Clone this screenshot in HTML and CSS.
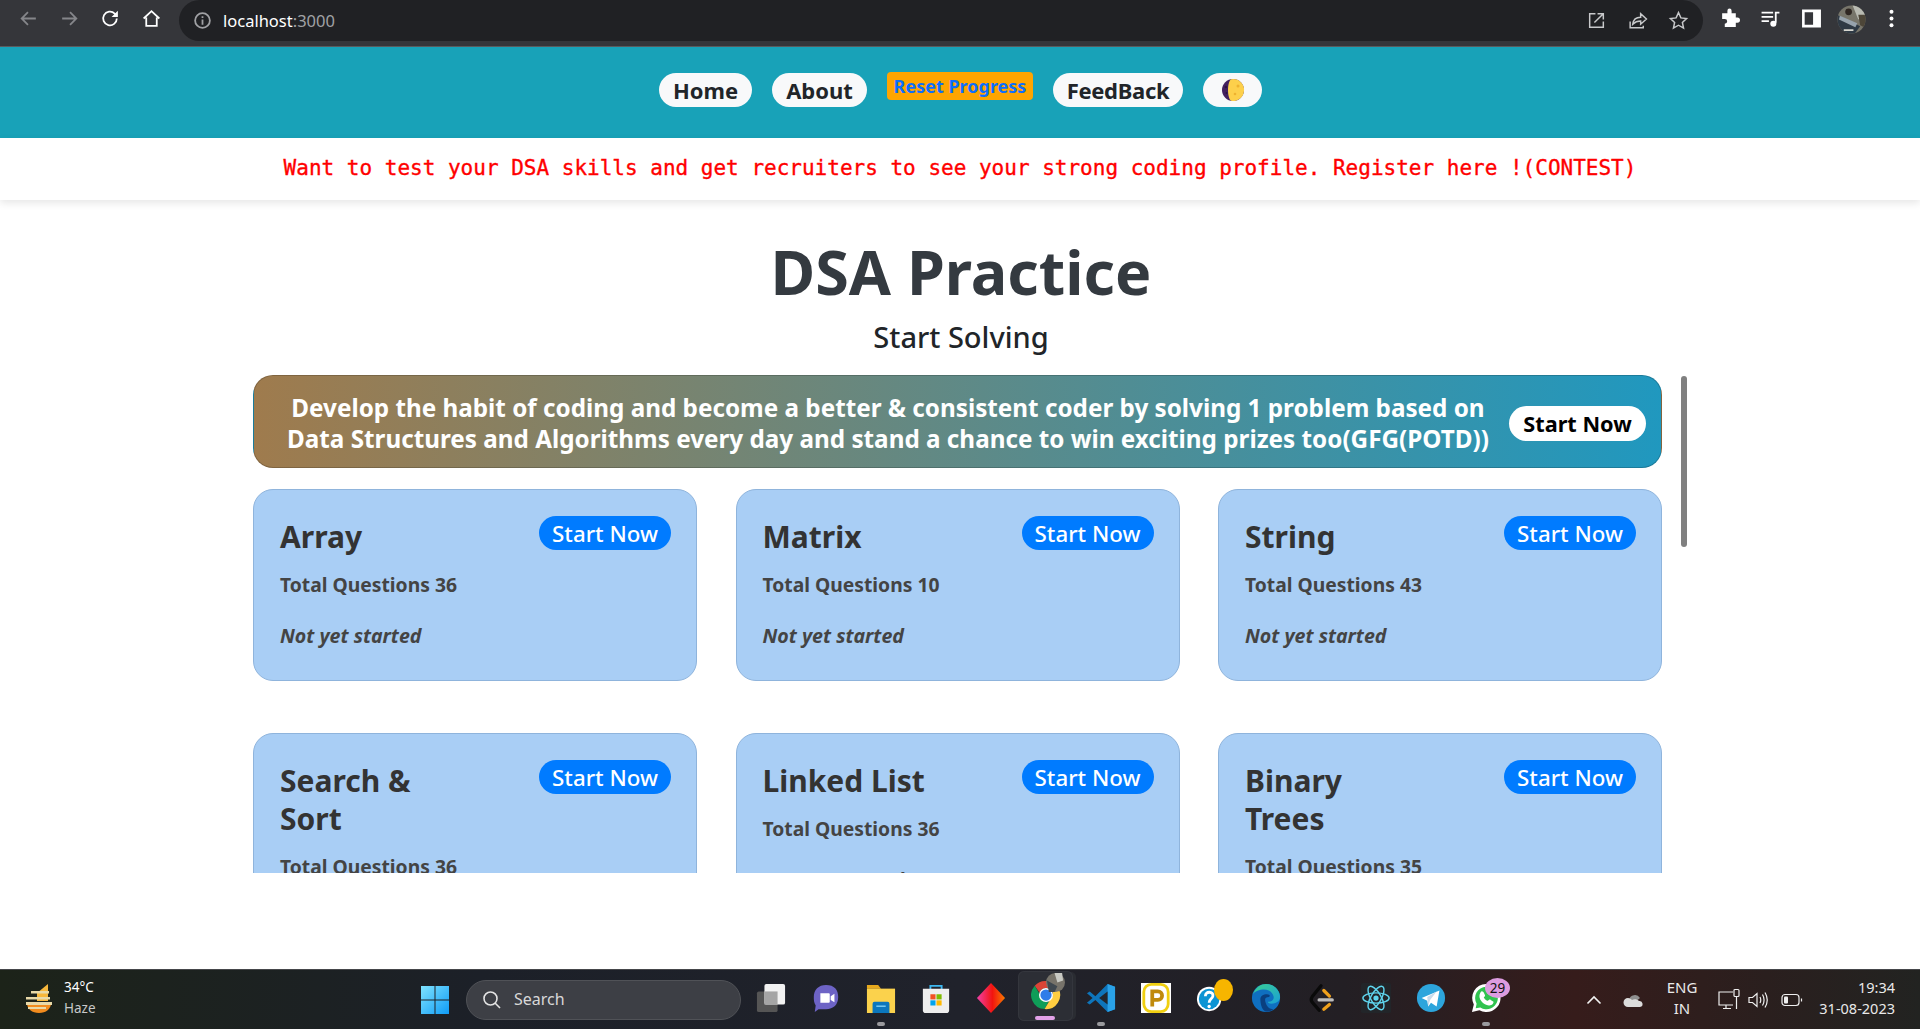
FILE: index.html
```html
<!DOCTYPE html>
<html lang="en">
<head>
<meta charset="utf-8">
<title>DSA Practice</title>
<link rel="stylesheet" href="styles.css">
</head>
<body>
<div class="browser-bar">
  <div class="nav-buttons">
    <svg class="tb-icon" viewBox="0 0 20 20"><path class="st-dim" d="M17 10H4M9.5 4 3.5 10l6 6"/></svg>
    <svg class="tb-icon" viewBox="0 0 20 20"><path class="st-dim" d="M3 10h13M10.500 4l6 6-6 6"/></svg>
    <svg class="tb-icon" viewBox="0 0 20 20"><path class="st-white" d="M16 10a6.500 6.500 0 1 1-2-4.700L16 7.200"/><path class="fill-white" d="M17 2.500v6h-6z"/></svg>
    <svg class="tb-icon" viewBox="0 0 20 20"><path class="st-white" d="M2.500 10 10 3l7.500 7M5 9v8h10V9"/></svg>
  </div>
  <div class="omnibox">
    <svg class="info-icon" viewBox="0 0 18 18"><circle class="st-gray" cx="9" cy="9" r="7"/><path class="st-gray" d="M9 8v5M9 5v1.600"/></svg>
    <span class="url-host">localhost</span><span class="url-port">:3000</span>
    <div class="omni-actions">
      <svg class="tb-icon" viewBox="0 0 20 20"><path class="st-light" d="M16.500 11v5.500h-13v-13H9M8 12 16 4M11 3.500h5.500V9"/></svg>
      <svg class="tb-icon" viewBox="0 0 20 20"><path class="st-light" d="M3 11v6h12.500v-2M5.500 13.500c.5-4 3.500-6.500 7.500-6.500V3.500l5.500 5-5.500 5V10.500c-3 0-5.500 1-7.500 3z"/></svg>
      <svg class="tb-icon" viewBox="0 0 20 20"><path class="st-light" d="m10 2.500 2.300 5 5.400.6-4 3.700 1.100 5.400L10 14.500l-4.800 2.700 1.100-5.400-4-3.700 5.400-.6z"/></svg>
    </div>
  </div>
  <div class="ext-buttons">
    <svg class="tb-icon" viewBox="0 0 20 20"><path class="fill-white" d="M8 2.500a2 2 0 0 1 4 0V5h4v4h1.500a2.300 2.300 0 0 1 0 5H16v4H5.500v-3a2.300 2.300 0 0 0 0-4.600H3V5h5z"/></svg>
    <svg class="tb-icon" viewBox="0 0 20 20"><path class="st-white" d="M1.500 4.500h11M1.500 8.500h11M1.500 12.500h7M15 14V4.500h3.500"/><circle class="fill-white" cx="12.700" cy="15" r="2.900"/></svg>
    <svg class="tb-icon" viewBox="0 0 20 20"><path class="fill-white" fill-rule="evenodd" d="M1 1.500h18v17H1zM3.500 4v12h8V4z"/></svg>
    <svg class="avatar" viewBox="0 0 30 30">
      <defs><clipPath id="avatar-clip"><circle cx="15" cy="15" r="14.500"/></clipPath></defs>
      <g clip-path="url(#avatar-clip)">
        <rect width="30" height="30" fill="#77756a"/>
        <path fill="#b9bbb2" d="M16 0h14v10l-8 5z"/>
        <path fill="#2f3a45" d="M0 10 24 22 18 30H0z"/>
        <path fill="#97a3ad" d="m3 11 18 8-2 4L2 15z"/>
        <path fill="#4d4638" d="M22 10h8v14l-6-3z"/>
        <circle cx="12" cy="7" r="3.500" fill="#2f2722"/>
        <path fill="#d8d7cf" d="M7 25h10v2H7z"/>
      </g>
    </svg>
    <svg class="tb-icon" viewBox="0 0 20 20"><circle class="fill-white" cx="10" cy="3.500" r="1.900"/><circle class="fill-white" cx="10" cy="10" r="1.900"/><circle class="fill-white" cx="10" cy="16.500" r="1.900"/></svg>
  </div>
</div>

<header class="site-header">
  <nav class="site-nav">
    <a class="pill">Home</a>
    <a class="pill pill-about">About</a>
    <button class="reset-btn">Reset Progress</button>
    <a class="pill pill-feedback">FeedBack</a>
    <a class="pill pill-theme">
      <svg class="moon" viewBox="0 0 24 24">
        <circle cx="12" cy="12" r="11" fill="#43205f"/>
        <path fill="#fdd04b" d="M10 1.200A11 11 0 1 1 10 22.800c-4-3-4-18.600 0-21.600z"/>
        <circle cx="4.800" cy="9" r="1.200" fill="#2c1542"/>
        <circle cx="5.500" cy="15" r="1" fill="#2c1542"/>
        <circle cx="17" cy="8" r="1.500" fill="#eeb22f"/>
        <circle cx="14" cy="16" r="1.300" fill="#eeb22f"/>
      </svg>
    </a>
  </nav>
</header>

<div class="notice">Want to test your DSA skills and get recruiters to see your strong coding profile. Register here !(CONTEST)</div>

<main class="page">
  <h1 class="page-title">DSA Practice</h1>
  <p class="page-subtitle">Start Solving</p>
  <div class="scroll-area">
    <section class="potd">
      <p class="potd-text">Develop the habit of coding and become a better &amp; consistent coder by solving 1 problem based on Data Structures and Algorithms every day and stand a chance to win exciting prizes too(GFG(POTD))</p>
      <a class="potd-btn">Start Now</a>
    </section>
    <section class="cards">
      <article class="card">
        <div class="card-top"><h3 class="card-title">Array</h3><a class="start-btn">Start Now</a></div>
        <p class="card-total">Total Questions 36</p>
        <p class="card-status">Not yet started</p>
      </article>
      <article class="card">
        <div class="card-top"><h3 class="card-title">Matrix</h3><a class="start-btn">Start Now</a></div>
        <p class="card-total">Total Questions 10</p>
        <p class="card-status">Not yet started</p>
      </article>
      <article class="card">
        <div class="card-top"><h3 class="card-title">String</h3><a class="start-btn">Start Now</a></div>
        <p class="card-total">Total Questions 43</p>
        <p class="card-status">Not yet started</p>
      </article>
      <article class="card">
        <div class="card-top"><h3 class="card-title">Search &amp; Sort</h3><a class="start-btn">Start Now</a></div>
        <p class="card-total">Total Questions 36</p>
        <p class="card-status">Not yet started</p>
      </article>
      <article class="card">
        <div class="card-top"><h3 class="card-title">Linked List</h3><a class="start-btn">Start Now</a></div>
        <p class="card-total">Total Questions 36</p>
        <p class="card-status">Not yet started</p>
      </article>
      <article class="card">
        <div class="card-top"><h3 class="card-title">Binary Trees</h3><a class="start-btn">Start Now</a></div>
        <p class="card-total">Total Questions 35</p>
        <p class="card-status">Not yet started</p>
      </article>
    </section>
  </div>
  <div class="scroll-thumb"></div>
</main>

<footer class="taskbar">
  <div class="weather">
    <svg class="weather-icon" viewBox="0 0 32 32">
      <path fill="#f28c1e" d="M4 20h24c0 6-5 10-12 10S4 26 4 20z"/>
      <path fill="#f6b73c" d="M14 10 25 1v17H14z"/>
      <path fill="#e8d9a8" d="M3 14h24v2.500H3zM3 19h26v3H3zM8 8h18v2.500H8zM5 24h18v2H5z"/>
    </svg>
    <div class="weather-text"><span>34°C</span><span class="weather-sub">Haze</span></div>
  </div>
  <div class="task-center">
    <svg class="start-icon" viewBox="0 0 28 28">
      <defs><linearGradient id="win" x1="0" y1="0" x2="1" y2="1"><stop offset="0" stop-color="#7fe3ff"/><stop offset="1" stop-color="#0f9bf5"/></linearGradient></defs>
      <path fill="url(#win)" d="M0 0h13.500v13.500H0zM14.500 0H28v13.500H14.500zM0 14.500h13.500V28H0zM14.500 14.500H28V28H14.500z"/>
    </svg>
    <div class="search-box">
      <svg class="search-icon" viewBox="0 0 20 20"><circle cx="8.500" cy="8.500" r="6.500"/><path d="m13 13 5 5"/></svg>
      <span class="search-label">Search</span>
    </div>
    <div class="task-icons">
      <div class="task-slot"><svg class="task-icon" viewBox="0 0 32 32"><rect x="1" y="9" width="22" height="22" rx="2" fill="#555"/><rect x="9" y="1" width="22" height="22" rx="2" fill="#f2f2f2"/><rect x="9" y="9" width="14" height="14" fill="#a5a5a5"/></svg></div>
      <div class="task-slot"><svg class="task-icon" viewBox="0 0 32 32"><path fill="#6d63c5" d="M16 2c9 0 13 5 13 13s-5 13-13 13H8l-4 3 1-7C3 21 3 18 3 15 3 7 8 2 16 2z"/><path fill="#fff" d="M10 11h9a1 1 0 0 1 1 1v8a1 1 0 0 1-1 1h-9zM21 14l4-2.500v9L21 18z"/></svg></div>
      <div class="task-slot has-dot"><svg class="task-icon" viewBox="0 0 32 32"><path fill="#e7a91d" d="M1 2h12l3 4H1z"/><path fill="#fbd24c" d="M1 6h30v26H1z"/><path fill="#0b77bd" d="M9 20h14a2 2 0 0 1 2 2v10H7V22a2 2 0 0 1 2-2z"/><path fill="#7cd0f7" d="M11 24h10v1.500H11z"/></svg></div>
      <div class="task-slot"><svg class="task-icon" viewBox="0 0 32 32"><path fill="none" stroke="#3db7f0" stroke-width="2" d="M10 9V3h12v6"/><path fill="#eeeeee" d="M2 6h28v23a3 3 0 0 1-3 3H5a3 3 0 0 1-3-3z"/><path fill="#f25022" d="M10 12h5.500v5.500H10z"/><path fill="#7fba00" d="M16.500 12H22v5.500h-5.500z"/><path fill="#00a4ef" d="M10 18.500h5.500V24H10z"/><path fill="#ffb900" d="M16.500 18.500H22V24h-5.500z"/></svg></div>
      <div class="task-slot"><svg class="task-icon" viewBox="0 0 32 32"><defs><linearGradient id="dia" x1="0" y1="0" x2="1" y2="0"><stop offset="0" stop-color="#f040a8"/><stop offset=".55" stop-color="#f2140f"/><stop offset="1" stop-color="#f97a00"/></linearGradient></defs><path fill="url(#dia)" d="M16 0 31 22 16 44 1 22z" transform="scale(1 .727)"/></svg></div>
      <div class="task-slot is-active"><svg class="task-icon" viewBox="0 0 32 32"><path fill="#db4437" d="M16 1a15 15 0 0 1 13 7.500H16a7.500 7.500 0 0 0-7 4.800L4 6a15 15 0 0 1 12-5z"/><path fill="#0f9d58" d="M4 6l6.500 11.300a7.500 7.500 0 0 0 8.500 5.600L14.500 31A15 15 0 0 1 4 6z"/><path fill="#ffcd40" d="M29 8.500A15 15 0 0 1 14.500 31L21 20a7.500 7.500 0 0 0-.500-11.500z"/><circle cx="16" cy="16" r="7.500" fill="#fff"/><circle cx="16" cy="16" r="6" fill="#2f7de9"/></svg><svg class="chrome-badge" viewBox="0 0 20 20"><circle cx="10" cy="10" r="10" fill="#77736a"/><path fill="#c8c9c3" d="M9 0h8l1 8-6 2z"/><path fill="#3f4850" d="m1 8 11 6-3 6H3z"/></svg></div>
      <div class="task-slot has-dot"><svg class="task-icon" viewBox="0 0 32 32"><path fill="#0e75bb" d="M23 1 10 14 4 9 1 11l6 5-6 5 3 2 6-5 13 13 8-3V4z"/><path fill="#2aa2e8" d="M23 1v30l8-3V4z"/><path fill="#22262d" d="m23 9-9 7 9 7z"/></svg></div>
      <div class="task-slot"><svg class="task-icon" viewBox="0 0 32 32"><rect width="32" height="32" fill="#fff"/><rect x="3" y="1.500" width="26" height="29" rx="8" fill="none" stroke="#f0cf10" stroke-width="3"/><path fill="none" stroke="#c08a0c" stroke-width="4" d="M12 25V9h6a4.500 4.500 0 0 1 0 9h-6"/></svg></div>
      <div class="task-slot"><svg class="task-icon" viewBox="0 0 32 32"><circle cx="14" cy="17" r="13" fill="#fff"/><circle cx="14" cy="17" r="11" fill="#0c94d4"/><path fill="none" stroke="#fff" stroke-width="3" d="M10 14c0-6 9-5 8 0-.5 3-4 3-4 7"/><circle cx="14" cy="25" r="1.800" fill="#fff"/></svg><span class="help-badge"></span></div>
      <div class="task-slot"><svg class="task-icon" viewBox="0 0 32 32"><defs><linearGradient id="edge" x1="0" y1="0" x2="1" y2="1"><stop offset="0" stop-color="#3bd08f"/><stop offset="1" stop-color="#1a9fd6"/></linearGradient></defs><circle cx="16" cy="16" r="15" fill="#0f6fc0"/><path fill="url(#edge)" d="M2 12C5 4 11 1 16 1c9 0 15 7 15 14 0 5-5 7-9 7-3 0-4-1-4-2 5 0 7-3 6-6-1-4-5-7-10-7C9 7 4 9 2 12z"/><path fill="#0a3f7f" d="M10 17c0-3 3-5 7-5 3 0 4 2 2 3-4 0-5 2-3 7 1 3 4 6 8 6-3 2-6 3-9 2-4-2-5-9-5-13z"/></svg></div>
      <div class="task-slot"><svg class="task-icon" viewBox="0 0 32 32"><path fill="none" stroke="#0a0a0a" stroke-width="3.500" stroke-linecap="round" d="m16 3-9 11c-2 3-2 5 0 7l7 8"/><path fill="none" stroke="#f0a11c" stroke-width="3.500" stroke-linecap="round" d="M19 8l6 6M19 28l6-5"/><path stroke="#bdbdbd" stroke-width="3.500" stroke-linecap="round" d="M14 18h14"/></svg></div>
      <div class="task-slot"><svg class="task-icon" viewBox="0 0 32 32"><rect width="32" height="32" rx="2" fill="#222529"/><g fill="none" stroke="#5fd5ee" stroke-width="1.500"><ellipse cx="16" cy="16" rx="14" ry="5.500"/><ellipse cx="16" cy="16" rx="14" ry="5.500" transform="rotate(60 16 16)"/><ellipse cx="16" cy="16" rx="14" ry="5.500" transform="rotate(120 16 16)"/></g><circle cx="16" cy="16" r="2.800" fill="#5fd5ee"/></svg></div>
      <div class="task-slot"><svg class="task-icon" viewBox="0 0 32 32"><circle cx="16" cy="16" r="15" fill="#2da5dc"/><path fill="#fff" d="M6 16 25 8l-3 17-6-4-3 4-1-6z"/><path fill="#c8daea" d="m12 15 10-6-7 9-2 7z"/></svg></div>
      <div class="task-slot has-dot"><svg class="task-icon" viewBox="0 0 32 32"><path fill="#fff" d="M16 1a15 15 0 0 0-13 22L1 31l8-2A15 15 0 1 0 16 1z"/><path fill="#31c34f" d="M16 4A12 12 0 0 0 6 22l-1 5 5-1A12 12 0 1 0 16 4z"/><path fill="#fff" d="M11 9c2-1 3 2 4 4 0 2-2 2-1 3 1 2 3 3 4 3 1-1 2-2 3-1l3 2c0 3-3 4-5 4-6-1-10-6-10-10 0-2 1-4 2-5z"/></svg><span class="wa-badge">29</span></div>
    </div>
  </div>
  <div class="tray">
    <svg class="tray-chev" viewBox="0 0 16 16"><path d="M1.500 11.500 8 5l6.500 6.500"/></svg>
    <svg class="tray-cloud" viewBox="0 0 22 14"><path fill="#8f8f8f" d="M6 7a6 6 0 0 1 11-2l-7 6z"/><path fill="#dcdcdc" d="M5 14a4.500 4.500 0 0 1 0-9c2 0 3 1 4 2 2-1 5-1 7 1a3 3 0 0 1 1 6z"/></svg>
    <div class="tray-lang"><span>ENG</span><span>IN</span></div>
    <svg class="tray-net" viewBox="0 0 24 24"><path d="M16 4H2v13h14M6 20.500h8M9 17v3.500"/><rect x="17" y="1.500" width="5" height="7" rx="1"/><path d="M19.500 8.500V21"/></svg>
    <svg class="tray-vol" viewBox="0 0 22 20"><path d="M2 7.500h3.500L10 3.500v13l-4.500-4H2zM13 7c1 2 1 4 0 6M15.500 4.500c2 3.500 2 7.500 0 11M18 2.500c3 5 3 10 0 15"/></svg>
    <svg class="tray-bat" viewBox="0 0 22 14"><rect x="1" y="1.500" width="17" height="11" rx="3"/><path d="M20.500 5.500v3"/><rect class="bat-level" x="3" y="3.500" width="4" height="7" rx="1"/></svg>
    <div class="tray-clock"><span>19:34</span><span>31-08-2023</span></div>
  </div>
</footer>
</body>
</html>
```

FILE: styles.css
```css
* { box-sizing: border-box; }
html, body { margin: 0; height: 100%; }
body {
  width: 1920px;
  height: 1029px;
  overflow: hidden;
  display: flex;
  flex-direction: column;
  background: #fff;
  font-family: "Noto Sans", "Open Sans", sans-serif;
}
p, h1, h3 { margin: 0; }

/* browser toolbar */
.browser-bar {
  height: 47px;
  flex: none;
  display: flex;
  background: #35363a;
  border-bottom: 1px solid #5a5b5e;
}
.nav-buttons { width: 179px; flex: none; display: flex; gap: 20px; padding: 8px 0 0 18px; }
.tb-icon { width: 21px; height: 21px; flex: none; }
.st-dim, .st-white, .st-light, .st-gray { fill: none; stroke-width: 1.7; }
.st-dim { stroke: #85868a; }
.st-white { stroke: #fff; }
.st-light { stroke: #c8c9cb; stroke-width: 1.4; }
.st-gray { stroke: #a0a1a4; }
.fill-white { fill: #fff; }
.omnibox {
  width: 1524px;
  height: 41px;
  flex: none;
  display: flex;
  align-items: center;
  padding-left: 14px;
  background: #202124;
  border-radius: 21px;
  font-size: 16.500px;
}
.info-icon { width: 19px; height: 19px; margin-right: 11px; }
.url-host { color: #fff; }
.url-port { color: #a0a1a4; }
.omni-actions { margin-left: auto; display: flex; gap: 20px; padding-right: 14px; }
.ext-buttons { flex: 1; display: flex; align-items: flex-start; padding: 8px 0 0 16px; gap: 20px; }
.avatar { width: 29px; height: 29px; margin: -3px -5px 0 -5px; flex: none; }

/* site header */
.site-header { height: 91px; flex: none; background: #18a2b8; padding-top: 26px; }
.site-nav { display: flex; justify-content: center; align-items: flex-start; gap: 20px; padding-left: 1px; }
.pill {
  height: 34px;
  display: flex;
  align-items: center;
  justify-content: center;
  width: 93px;
  border-radius: 17px;
  background: #f8f9fa;
  color: #212529;
  font-size: 22px;
  font-weight: 700;
  line-height: 1;
}
.pill-about { width: 95px; }
.pill-feedback { width: 130px; letter-spacing: -.3px; }
.reset-btn {
  height: 28px;
  margin-top: -1px;
  width: 146px;
  padding: 0;
  border: 0;
  border-radius: 4px;
  background: #ffa500;
  color: #0d6efd;
  font: 700 18px "Noto Sans", sans-serif;
}
.pill-theme { width: 59px; }
.moon { width: 24px; height: 24px; }

.notice {
  height: 62px;
  flex: none;
  display: flex;
  align-items: center;
  justify-content: center;
  padding-bottom: 2px;
  color: #f00;
  font: 400 21px "DejaVu Sans Mono", monospace;
  -webkit-text-stroke: .35px #f00;
  background: #fff;
  box-shadow: 0 3px 8px rgba(0, 0, 0, .1);
  position: relative;
}

/* page content */
.page {
  flex: 1;
  min-height: 0;
  position: relative;
  display: flex;
  flex-direction: column;
  align-items: center;
  padding-top: 30px;
}
.page-title { font-size: 61px; line-height: 84px; font-weight: 700; color: #343a40; margin-left: 2px; }
.page-subtitle { font-size: 29px; line-height: 38px; font-weight: 500; color: #212529; margin-top: 4px; margin-left: 2px; }
.scroll-area {
  width: 1409px;
  height: 498px;
  margin-top: 19px;
  margin-right: 5px;
  overflow: hidden;
  flex: none;
}
.potd {
  height: 93px;
  display: flex;
  align-items: center;
  padding: 2px 15px 0 27px;
  border: 1px solid rgba(0, 0, 0, .18);
  border-radius: 20px;
  background: linear-gradient(90deg, #9f7b4d, #2098bf);
}
.potd-text { flex: 1; text-align: center; color: #fff; font-size: 24.250px; line-height: 31px; font-weight: 700; }
.potd-btn {
  width: 137px;
  height: 35px;
  flex: none;
  margin: 2px 0 0 14px;
  display: flex;
  align-items: center;
  justify-content: center;
  border-radius: 18px;
  background: #fff;
  color: #000;
  font-size: 21.700px;
  font-weight: 700;
}
.cards {
  display: grid;
  grid-template-columns: repeat(3, 444px);
  justify-content: space-between;
  row-gap: 52px;
  margin-top: 21px;
}
.card {
  min-height: 192px;
  padding: 26px 25px 29px 26px;
  border: 1px solid #8fb4dc;
  border-radius: 20px;
  background: #a9cef5;
}
.card-top { display: flex; justify-content: space-between; align-items: flex-start; }
.card-title { width: 170px; margin-top: 2px; font-size: 30px; line-height: 38px; font-weight: 700; color: #333; }
.start-btn {
  width: 132px;
  height: 34px;
  display: flex;
  align-items: center;
  justify-content: center;
  border-radius: 17px;
  background: #007bff;
  color: #fff;
  font-size: 22.300px;
  font-weight: 500;
}
.card-total { margin-top: 14px; font-size: 19.300px; line-height: 30px; font-weight: 700; color: #444; }
.card-status { margin-top: 21px; font-size: 19.600px; line-height: 30px; font-weight: 700; font-style: italic; color: #444; }
.scroll-thumb {
  position: absolute;
  left: 1681px;
  top: 176px;
  width: 6px;
  height: 171px;
  border-radius: 3px;
  background: #808080;
}

/* taskbar */
.taskbar {
  height: 60px;
  flex: none;
  position: relative;
  display: flex;
  align-items: center;
  border-top: 1px solid #45464a;
  background: linear-gradient(90deg, #1c2319 0, #1c2028 25%, #20222b 50%, #231f24 70%, #361c1b 82%, #2a1f1e 92%, #222321 100%);
  color: #e9e9e9;
  font-size: 14px;
}
.weather { width: 421px; flex: none; display: flex; align-items: center; padding-left: 24px; gap: 9px; }
.weather-icon { width: 32px; height: 32px; margin-left: -1px; margin-bottom: 2px; }
.weather-text { display: flex; flex-direction: column; line-height: 21px; padding-bottom: 3px; font-size: 13.500px; color: #fff; }
.weather-sub { color: #c8c8c8; }
.task-center { display: flex; align-items: center; flex: none; }
.start-icon { width: 28px; height: 28px; }
.search-box {
  width: 275px;
  height: 40px;
  margin-left: 17px;
  display: flex;
  align-items: center;
  gap: 12px;
  padding-left: 15px;
  border-radius: 20px;
  border: 1px solid #505257;
  background: #3d3f45;
  color: #d8d8d8;
  font-size: 16px;
}
.search-label { padding-bottom: 2px; }
.search-icon { width: 20px; height: 20px; fill: none; stroke: #e4e4e4; stroke-width: 1.6; }
.task-icons { display: flex; margin-left: 2px; }
.task-slot {
  width: 55px;
  height: 58px;
  padding-bottom: 3px;
  position: relative;
  display: flex;
  align-items: center;
  justify-content: center;
}
.task-icon { width: 30px; height: 30px; }
.has-dot::after {
  content: "";
  position: absolute;
  left: 24px;
  bottom: 3px;
  width: 8px;
  height: 4px;
  border-radius: 2px;
  background: #9a9a9e;
}
.is-active { background: #2c2e35; border-radius: 6px; height: 50px; padding-bottom: 2px; box-shadow: inset 0 0 0 1px #34363d, 4px 0 0 -1px #2a2c32; }
.is-active::after {
  content: "";
  position: absolute;
  left: 17px;
  bottom: 1px;
  width: 20px;
  height: 4px;
  border-radius: 2px;
  background: #e2a1e8;
}
.chrome-badge { position: absolute; left: 28px; top: 2px; width: 19px; height: 19px; }
.help-badge { position: absolute; left: 31px; top: 8px; width: 19px; height: 22px; border-radius: 50%; background: #f7b500; }
.wa-badge {
  position: absolute;
  left: 27px;
  top: 7px;
  width: 25px;
  height: 20px;
  border-radius: 50%;
  background: #dd9ce0;
  color: #111;
  font-size: 13.500px;
  line-height: 20px;
  text-align: center;
}
.tray { flex: 1; display: flex; align-items: center; padding-left: 73px; min-width: 0; }
.tray-chev { width: 16px; height: 16px; fill: none; stroke: #f2f2f2; stroke-width: 1.6; }
.tray-cloud { width: 22px; height: 14px; margin-left: 21px; }
.tray-lang { width: 40px; margin-left: 17px; display: flex; flex-direction: column; align-items: center; line-height: 21px; padding-bottom: 3px; font-size: 15px; }
.tray-net, .tray-vol, .tray-bat { fill: none; stroke: #efefef; stroke-width: 1.2; }
.tray-net { width: 24px; height: 24px; margin-left: 15px; }
.tray-vol { width: 22px; height: 20px; margin-left: 6px; }
.tray-bat { width: 22px; height: 14px; margin-left: 12px; }
.bat-level { fill: #efefef; stroke: none; }
.tray-clock { margin-left: auto; padding-right: 25px; display: flex; flex-direction: column; align-items: flex-end; line-height: 21px; padding-bottom: 3px; font-size: 14.500px; }
```
